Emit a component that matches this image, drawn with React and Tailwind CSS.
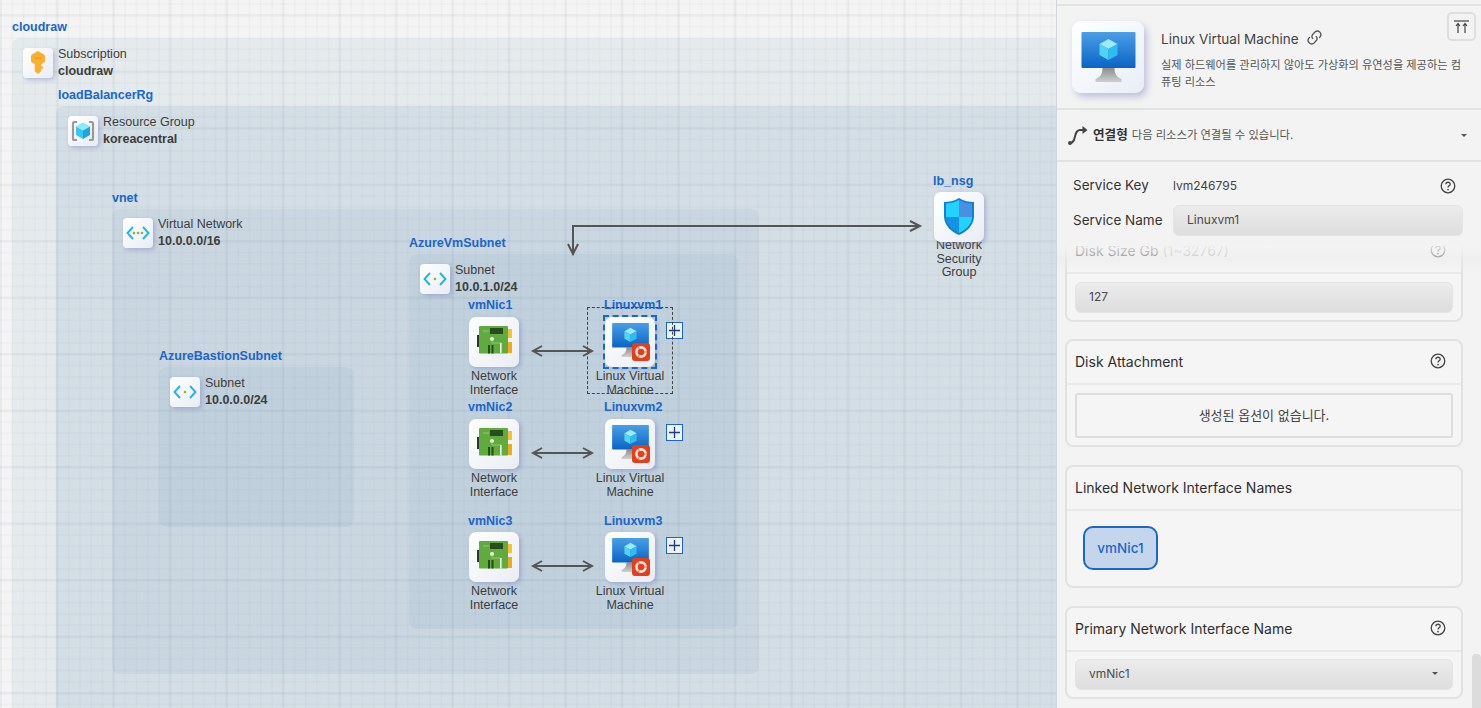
const LABEL = "absolute whitespace-nowrap text-[12.5px] leading-[14px] font-bold text-[#1b66c9]";
const CAPTION = "text-center text-[12.5px] leading-[13.5px] text-[#3d3d3d]";
const TILE =
  "relative flex shrink-0 items-center justify-center bg-linear-to-br from-[#ffffff] to-[#e9edf3] shadow-[2px_2px_4px_rgba(110,120,190,0.4)]";

function KeyIcon() {
  return (
    <svg width="14" height="24" viewBox="0 0 14 24">
      <path d="M7 0 L13 3.5 Q14 4 14 5 V10 Q14 11 13 11.6 L10.2 13.2 V15.5 H12 V17.8 H10.2 V20 L7.8 22.6 H6.2 L3.8 20.2 V13.2 L1 11.6 Q0 11 0 10 V5 Q0 4 1 3.5 Z" fill="#fbb02d" />
      <rect x="3.5" y="6.6" width="7" height="1" rx="0.5" fill="#ea9316" />
    </svg>
  );
}

function RgIcon() {
  return (
    <svg width="24" height="24" viewBox="0 0 24 24">
      <path d="M6 3 H3.5 Q2 3 2 4.5 V19.5 Q2 21 3.5 21 H6" fill="none" stroke="#9a9a9a" strokeWidth="2.2" />
      <path d="M18 3 H20.5 Q22 3 22 4.5 V19.5 Q22 21 20.5 21 H18" fill="none" stroke="#9a9a9a" strokeWidth="2.2" />
      <path d="M12 3.5 L19 7.5 L12 11.5 L5 7.5 Z" fill="#8beafa" />
      <path d="M5 7.5 L12 11.5 V20 L5 16 Z" fill="#35c9f1" />
      <path d="M19 7.5 L12 11.5 V20 L19 16 Z" fill="#1ba6e6" />
    </svg>
  );
}

function NetIcon({ dots = 3 }) {
  return (
    <svg width="24" height="16" viewBox="0 0 24 16">
      <path d="M7 2 L1.5 8 L7 14" fill="none" stroke="#1fb5ea" strokeWidth="1.9" />
      <path d="M17 2 L22.5 8 L17 14" fill="none" stroke="#1fb5ea" strokeWidth="1.9" />
      {dots === 3 ? (
        <>
          <circle cx="8" cy="8" r="1.3" fill="#7fba38" />
          <circle cx="12" cy="8" r="1.3" fill="#7fba38" />
          <circle cx="16" cy="8" r="1.3" fill="#7fba38" />
        </>
      ) : (
        <circle cx="12" cy="8" r="1.3" fill="#7fba38" />
      )}
    </svg>
  );
}

function NicIcon() {
  return (
    <svg className="-mt-[4px]" width="36" height="28" viewBox="0 0 36 28">
      <rect x="1" y="9" width="2" height="12" fill="#333" />
      <rect x="32" y="3" width="4" height="9" fill="#fbc02d" />
      <rect x="32" y="16" width="4" height="11" fill="#f4a81c" />
      <rect x="3" y="0" width="29" height="27.5" rx="1" fill="#5fab3e" />
      <rect x="14" y="2" width="13" height="6" fill="#264d1d" />
      <circle cx="16" cy="13" r="2" fill="#eef5e4" />
      <path d="M7 5 H13 M16 13 V17 H25" fill="none" stroke="#a4d488" strokeWidth="0.7" />
      <rect x="12" y="19" width="2" height="8.5" fill="#264d1d" />
      <rect x="15.5" y="19" width="2" height="8.5" fill="#264d1d" />
      <rect x="24" y="17" width="1.6" height="10.5" fill="#f4f8ef" />
    </svg>
  );
}

function VmIcon({ id, width, height, className = "" }) {
  return (
    <svg className={className} width={width} height={height} viewBox="0 0 54 50">
      <defs>
        <linearGradient id={`${id}Screen`} x1="0" y1="0" x2="0" y2="1">
          <stop offset="0" stopColor="#4a9fe6" />
          <stop offset="1" stopColor="#0b63c5" />
        </linearGradient>
        <linearGradient id={`${id}Stand`} x1="0" y1="0" x2="0" y2="1">
          <stop offset="0" stopColor="#8d8d8d" />
          <stop offset="1" stopColor="#cfcfcf" />
        </linearGradient>
      </defs>
      <path d="M21 36 H33 C33 42 35 45 40 47 V50 H14 V47 C19 45 21 42 21 36 Z" fill={`url(#${id}Stand)`} />
      <rect x="0" y="0" width="54" height="36" rx="1" fill={`url(#${id}Screen)`} />
      <path d="M27 7 L36 12 L27 17 L18 12 Z" fill="#9cebf9" />
      <path d="M18 12 L27 17 V28 L18 23 Z" fill="#50d4f4" />
      <path d="M36 12 L27 17 V28 L36 23 Z" fill="#2dbdf0" />
    </svg>
  );
}

function UbuntuBadge() {
  return (
    <div className="absolute left-[27px] top-[26px] flex h-[18px] w-[18px] items-center justify-center rounded-[3px] bg-[#e2401d]">
      <svg width="14" height="14" viewBox="0 0 14 14">
        <circle cx="7" cy="7" r="4.6" fill="none" stroke="#fbe6e0" strokeWidth="2.6" />
        <path d="M9.4 7 H13 M5.8 5 L4 1.8 M5.8 9 L4 12.2" stroke="#e2401d" strokeWidth="0.8" />
      </svg>
    </div>
  );
}

function ShieldIcon() {
  return (
    <svg className="-mt-[1px]" width="30" height="38" viewBox="0 0 30 38">
      <path d="M15 0 C10 3 5 4 0 4 V18 C0 28 8 34 15 37 C22 34 30 28 30 18 V4 C25 4 20 3 15 0 Z" fill="#0f7fd8" />
      <path d="M15 2 C11 4.5 6 5.5 2 5.5 V19 H15 Z" fill="#22d4fb" />
      <path d="M15 2 C19 4.5 24 5.5 28 5.5 V19 H15 Z" fill="#4a90e2" />
      <path d="M2 19 H15 V35 C9 32 2 27 2 19 Z" fill="#1492e6" />
      <path d="M28 19 H15 V35 C21 32 28 27 28 19 Z" fill="#22d4fb" />
    </svg>
  );
}

function HelpIcon({ className = "" }) {
  return (
    <svg className={className} width="16" height="16" viewBox="0 0 16 16">
      <circle cx="8" cy="8" r="6.8" fill="none" stroke="#444" strokeWidth="1.3" />
      <path d="M5.9 6.3 C5.9 3.6 10.2 3.6 10.2 6.2 C10.2 7.9 8 7.8 8 9.6" fill="none" stroke="#444" strokeWidth="1.3" />
      <circle cx="8" cy="11.6" r="0.85" fill="#444" />
    </svg>
  );
}

function Caret() {
  return <div className="h-0 w-0 border-x-[3.5px] border-t-[3.5px] border-x-transparent border-t-[#555]" />;
}

// 아이콘 + 오른쪽 설명이 붙는 그룹 헤더 노드
function HeadNode({ className, icon, title, value }) {
  return (
    <div className={`absolute flex items-center gap-[5px] whitespace-nowrap text-[12.5px] leading-[17px] text-[#3d3d3d] ${className}`}>
      <div className={`${TILE} h-[30px] w-[30px] rounded-[4px]`}>{icon}</div>
      <div>
        <div>{title}</div>
        <div className="font-bold">{value}</div>
      </div>
    </div>
  );
}

// 아이콘 아래로 이름이 붙는 리소스 노드
function ResourceNode({ className, captionClass = "mt-[3px]", lines, children }) {
  return (
    <div className={`absolute flex w-[100px] flex-col items-center ${className}`}>
      <div className={`${TILE} h-[50px] w-[50px] rounded-[7px]`}>{children}</div>
      <div className={`${CAPTION} ${captionClass}`}>
        {lines.map(l => (
          <div key={l}>{l}</div>
        ))}
      </div>
    </div>
  );
}

function PlusButton() {
  return (
    <div className="absolute left-[61px] top-[5px] flex h-[17px] w-[17px] items-center justify-center border border-[#1b66c9] bg-[#eef2f7]">
      <svg width="11" height="11" viewBox="0 0 11 11">
        <path d="M5.5 0 V11 M0 5.5 H11" stroke="#1d3f78" strokeWidth="1.3" />
      </svg>
    </div>
  );
}

function VmPair({ id, rowClass, labelClass, nic, vm }) {
  return (
    <>
      <div className={`${LABEL} left-[468px] ${labelClass}`}>{nic}</div>
      <ResourceNode className={`left-[444px] ${rowClass}`} lines={["Network", "Interface"]}>
        <NicIcon />
      </ResourceNode>
      <div className={`${LABEL} left-[604px] ${labelClass}`}>{vm}</div>
      <ResourceNode className={`left-[580px] ${rowClass}`} lines={["Linux Virtual", "Machine"]}>
        <VmIcon id={id} width={37} height={34} className="-mt-[4px]" />
        <UbuntuBadge />
        <PlusButton />
      </ResourceNode>
    </>
  );
}

function Canvas() {
  return (
    <div className="relative h-full w-[1056px] shrink-0 overflow-hidden bg-[#f4f4f4] bg-[linear-gradient(rgba(90,100,110,0.04)_3px,transparent_3px),linear-gradient(90deg,rgba(90,100,110,0.04)_3px,transparent_3px),linear-gradient(rgba(90,100,110,0.035)_2px,transparent_2px),linear-gradient(90deg,rgba(90,100,110,0.035)_2px,transparent_2px)] bg-[size:56.5px_56.5px,56.5px_56.5px,11.3px_11.3px,11.3px_11.3px] bg-[position:0_14px,-1px_0,0_3px,0_0]">
      {/* 그룹 영역 */}
      <div className="absolute left-[12px] top-[38px] h-[720px] w-[1100px] rounded-lg bg-[#467aa5]/8" />
      <div className="absolute left-[56px] top-[106px] h-[660px] w-[1060px] rounded-lg bg-[#467aa5]/10" />
      <div className="absolute left-[112px] top-[209px] h-[465px] w-[647px] rounded-lg bg-[#467aa5]/7" />
      <div className="absolute left-[409px] top-[254px] h-[375px] w-[329px] rounded-lg bg-[#467aa5]/7" />
      <div className="absolute left-[159px] top-[367px] h-[160px] w-[195px] rounded-lg bg-[#467aa5]/7" />

      <div className={`${LABEL} left-[12px] top-[20px]`}>cloudraw</div>
      <div className={`${LABEL} left-[58px] top-[88px]`}>loadBalancerRg</div>
      <div className={`${LABEL} left-[112px] top-[191px]`}>vnet</div>
      <div className={`${LABEL} left-[409px] top-[236px]`}>AzureVmSubnet</div>
      <div className={`${LABEL} left-[159px] top-[349px]`}>AzureBastionSubnet</div>
      <div className={`${LABEL} left-[933px] top-[174px]`}>lb_nsg</div>

      <HeadNode className="left-[23px] top-[46px]" icon={<KeyIcon />} title="Subscription" value="cloudraw" />
      <HeadNode className="left-[68px] top-[114px]" icon={<RgIcon />} title="Resource Group" value="koreacentral" />
      <HeadNode className="left-[123px] top-[216px]" icon={<NetIcon />} title="Virtual Network" value="10.0.0.0/16" />
      <HeadNode className="left-[420px] top-[262px]" icon={<NetIcon dots={1} />} title="Subnet" value="10.0.1.0/24" />
      <HeadNode className="left-[170px] top-[375px]" icon={<NetIcon dots={1} />} title="Subnet" value="10.0.0.0/24" />

      <VmPair id="vm1" nic="vmNic1" vm="Linuxvm1" labelClass="top-[298px]" rowClass="top-[317px]" />
      <VmPair id="vm2" nic="vmNic2" vm="Linuxvm2" labelClass="top-[400px]" rowClass="top-[419px]" />
      <VmPair id="vm3" nic="vmNic3" vm="Linuxvm3" labelClass="top-[514px]" rowClass="top-[532px]" />

      {/* 선택 표시 */}
      <div className="absolute left-[587px] top-[307px] h-[87px] w-[86px] border border-dashed border-[#444]" />
      <div className="absolute left-[603px] top-[315px] h-[54px] w-[54px] border-[2.5px] border-dashed border-[#1b66c9]" />

      <ResourceNode className="left-[909px] top-[192px]" captionClass="-mt-[3px]" lines={["Network", "Security", "Group"]}>
        <ShieldIcon />
      </ResourceNode>

      {/* 엣지 */}
      <svg className="absolute left-0 top-0" width="1056" height="708" fill="none" stroke="#555" strokeWidth="2">
        <path d="M573 255 V226 H920" />
        <path d="M568 244 L573 254 L578 244 M910 221 L920 226 L910 231" />
        {[351, 453, 566].map(y => (
          <path key={y} d={`M533 ${y} H592 M542 ${y - 5} L533 ${y} L542 ${y + 5} M583 ${y - 5} L592 ${y} L583 ${y + 5}`} />
        ))}
      </svg>
    </div>
  );
}

function Card({ title, help = true, className = "", children, bodyClass = "" }) {
  return (
    <div className={`shrink-0 rounded-lg border-2 border-[#e2e2e2] bg-[#f5f5f5] ${className}`}>
      <div className="flex h-[44px] items-center justify-between border-b-2 border-[#e9e9e9] pb-[2px] pl-[8px] pr-[15px] text-[14px] text-[#2f2f2f]">
        <span>{title}</span>
        {help && <HelpIcon />}
      </div>
      <div className={`px-[8px] ${bodyClass}`}>{children}</div>
    </div>
  );
}

function FieldBox({ children, className = "" }) {
  return (
    <div className={`flex h-[31px] items-center rounded-md border border-[#e4e4e4] bg-linear-to-b from-[#ececec] to-[#dddddd] pb-[2px] pl-[13px] text-[12px] text-[#4a4a4a] ${className}`}>
      {children}
    </div>
  );
}

function Panel() {
  return (
    <div className="relative flex h-full min-w-0 flex-1 flex-col border-l border-[#cfd6de] bg-[#f3f3f3] font-['Inter','Noto_Sans_CJK_KR',sans-serif]">
      {/* 상단 고정 영역 */}
      <div className="relative z-10 shrink-0 bg-[#f3f3f3]">
        <div className="h-[4px]" />
        <div className="relative flex h-[106px] border-y-2 border-[#e2e2e2] pl-[15px] pt-[15px]">
          <div className="flex h-[72px] w-[72px] shrink-0 items-center justify-center rounded-[9px] bg-linear-to-br from-[#ffffff] to-[#e9eef6] shadow-[3px_4px_7px_rgba(110,120,190,0.4)]">
            <VmIcon id="vmLarge" width={55} height={50} />
          </div>
          <div className="ml-[17px] w-[308px]">
            <div className="flex items-center gap-[7px] pt-[9px] text-[13.5px] leading-[18px] text-[#444]">
              Linux Virtual Machine
              <svg className="-mt-[3px]" width="17" height="17" viewBox="0 0 24 24" fill="none" stroke="#555" strokeWidth="1.8">
                <path d="M10 14a5 5 0 0 1 0-7l3-3a5 5 0 0 1 7 7l-1.5 1.5" />
                <path d="M14 10a5 5 0 0 1 0 7l-3 3a5 5 0 0 1-7-7l1.5-1.5" />
              </svg>
            </div>
            <p className="mt-[9px] text-[11.2px] leading-[17px] text-[#555]">
              실제 하드웨어를 관리하지 않아도 가상화의 유연성을 제공하는 컴퓨팅 리소스
            </p>
          </div>
          <button className="absolute right-[5px] top-[6px] flex h-[29px] w-[29px] items-center justify-center rounded-[5px] border-2 border-[#dedede]">
            <svg width="15" height="14" viewBox="0 0 15 14" fill="none" stroke="#444" strokeWidth="1.2">
              <path d="M0 1 H15" />
              <path d="M4 13 V4 M2 6 L4 3.5 L6 6 M11 13 V4 M9 6 L11 3.5 L13 6" />
            </svg>
          </button>
        </div>
        <div className="flex h-[52px] items-center border-b-2 border-[#e2e2e2] pl-[10px] pr-[14px]">
          <svg width="21" height="21" viewBox="0 0 21 21" fill="none" stroke="#444" strokeWidth="1.9">
            <circle cx="3" cy="18" r="2" fill="#444" stroke="none" />
            <path d="M3 18 C10 18 6 5 13 5 H16" />
            <path d="M15.5 1 L20.5 5 L15.5 9 Z" fill="#444" stroke="none" />
          </svg>
          <span className="ml-[5px] text-[12.6px] font-semibold text-[#333]">연결형</span>
          <span className="ml-[4px] text-[11.3px] text-[#555]">다음 리소스가 연결될 수 있습니다.</span>
          <div className="ml-auto">
            <Caret />
          </div>
        </div>
        <div className="h-[84px] pl-[16px] pr-[18px] pt-[8px]">
          <div className="flex h-[31px] items-center text-[13.5px] text-[#333]">
            <span className="w-[100px]">Service Key</span>
            <span className="text-[12px] text-[#444]">lvm246795</span>
            <HelpIcon className="ml-auto mr-[7px]" />
          </div>
          <div className="mt-[4px] flex items-center text-[13.5px] text-[#333]">
            <span className="w-[100px]">Service Name</span>
            <FieldBox className="flex-1">Linuxvm1</FieldBox>
          </div>
        </div>
        {/* 스크롤 내용 위로 깔리는 페이드 */}
        <div className="pointer-events-none absolute left-0 right-0 top-full h-[26px] bg-linear-to-b from-[#f4f4f4]/85 via-[#ebebeb]/55 to-transparent" />
      </div>

      {/* 스크롤 영역 */}
      <div className="flex min-h-0 flex-1 flex-col gap-[17px] overflow-hidden pl-[8px] pr-[18px]">
        <Card title={<>Disk Size Gb <span className="text-[#aaa]">(1~32767)</span></>} className="-mt-[18px] h-[94px]" bodyClass="pt-[8px]">
          <FieldBox>127</FieldBox>
        </Card>
        <Card title="Disk Attachment" className="h-[108px]" bodyClass="pt-[8px]">
          <div className="flex h-[45px] items-center justify-center rounded-[3px] border-2 border-[#dddddd] text-[13px] text-[#444]">
            생성된 옵션이 없습니다.
          </div>
        </Card>
        <Card title="Linked Network Interface Names" help={false} className="mt-px h-[123px]" bodyClass="pt-[15px]">
          <div className="ml-[8px] flex h-[44px] w-[75px] items-center justify-center rounded-[10px] border-2 border-[#1b66c9] bg-[#c5d6ec] text-[13.5px] font-medium text-[#1b66c9]">
            vmNic1
          </div>
        </Card>
        <Card title="Primary Network Interface Name" className="mt-px h-[93px]" bodyClass="pt-[7px]">
          <FieldBox className="justify-between pr-[14px]">
            vmNic1
            <Caret />
          </FieldBox>
        </Card>
      </div>

      {/* 스크롤바 */}
      <div className="absolute bottom-0 right-0 h-[54px] w-[9px] rounded-t-[4px] bg-[#dcdcdc]" />
    </div>
  );
}

export default function App() {
  return (
    <div className="flex h-[708px] w-full overflow-hidden font-['Liberation_Sans',Arial,sans-serif]">
      <Canvas />
      <Panel />
    </div>
  );
}
